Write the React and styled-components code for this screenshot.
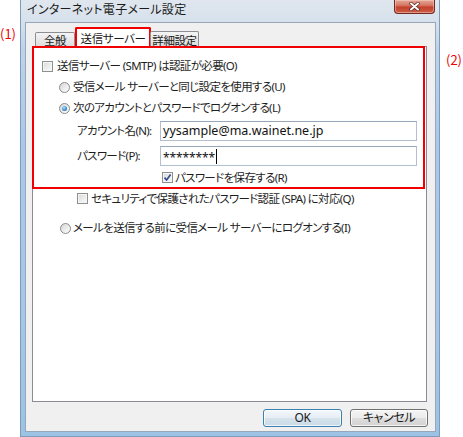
import React from 'react';
import styled, { createGlobalStyle } from 'styled-components';

const font = `"Noto Sans CJK JP", "Noto Sans", sans-serif`;
const mixed = `"Noto Sans", "Noto Sans CJK JP", sans-serif`;

const Global = createGlobalStyle`
  html, body { margin: 0; padding: 0; background: #ffffff; }
  body { width: 463px; height: 437px; overflow: hidden; font-family: ${font}; }
  * { box-sizing: border-box; }
`;

const Page = styled.div`
  display: flex;
  width: 463px;
  height: 437px;
`;

const Gutter = styled.div`
  flex: none;
  width: ${p => p.$w}px;
  padding-top: ${p => p.$top}px;
  padding-left: ${p => p.$left || 0}px;
`;

const Note = styled.span`
  display: block;
  color: #ee0000;
  font: 13px/13px ${font};
  font-feature-settings: "palt";
`;

const Window = styled.div`
  flex: none;
  width: 420px;
  height: 437px;
  display: flex;
  flex-direction: column;
  border: 1px solid #7f9bbb;
  border-top: none;
  background: linear-gradient(180deg, #dfe6ee 0px, #d8e2ec 20px, #bcd3ea 50px, #aac9ea 140px, #a6c7ea 300px, #9cc3e4 100%);
`;

const TitleBar = styled.div`
  height: 22px;
  flex: none;
  display: flex;
  justify-content: space-between;
  align-items: flex-start;
  padding-left: 6px;
  padding-right: 4px;
`;

const Title = styled.span`
  font: 12px/16px ${font};
  font-feature-settings: "palt";
  color: #1c1c1c;
  padding-top: 1px;
  letter-spacing: 0.3px;
`;

const CloseButton = styled.div`
  width: 41px;
  height: 14px;
  border: 1px solid #6e2b23;
  border-top: none;
  border-radius: 0 0 4px 4px;
  background: linear-gradient(180deg, #e4a596 0%, #d77a66 40%, #c3412e 55%, #cf5e45 100%);
  box-shadow: inset 0 0 0 1px rgba(255, 220, 210, 0.45);
  display: flex;
  align-items: center;
  justify-content: center;
`;

const Frame = styled.div`
  flex: 1;
  display: flex;
  padding: 0 3px 4px 4px;
`;

const Client = styled.div`
  flex: 1;
  display: flex;
  flex-direction: column;
  background: #f0f0f0;
  border: 1px solid #97a7b9;
`;

const TabStrip = styled.div`
  height: 23px;
  flex: none;
  display: flex;
  align-items: flex-end;
  margin: 0 8px 0 6px;
  padding-left: 3px;
  position: relative;
  z-index: 1;
`;

const Tab = styled.div`
  height: ${p => (p.$active ? 19 : p.$h)}px;
  width: ${p => p.$w}px;
  margin-left: ${p => p.$ml || 0}px;
  display: flex;
  align-items: center;
  justify-content: center;
  padding-top: ${p => (p.$active ? 0 : 1)}px;
  font: 11.5px/12px ${font};
  font-feature-settings: "palt";
  letter-spacing: -0.4px;
  color: #1a1a1a;
  border: ${p => (p.$active ? '2px solid #f00000' : '1px solid #8c8e94')};
  border-bottom: none;
  border-radius: 2px 2px 0 0;
  background: ${p => (p.$active ? '#ffffff' : 'linear-gradient(180deg, #f4f4f4 0%, #e8e8e8 55%, #dddddd 100%)')};
`;

const Panel = styled.div`
  height: 356px;
  flex: none;
  margin: 0 8px 0 6px;
  border: 1px solid #898c95;
  background: #ffffff;
  display: flex;
  flex-direction: column;
`;

const Highlight = styled.div`
  height: 143px;
  flex: none;
  margin: -1px 1px 0 -1px;
  border: 2px solid #f00000;
  padding-top: 8px;
  display: flex;
  flex-direction: column;
  position: relative;
  z-index: 2;
`;

const textStyle = `
  font: 11.5px/14px ${mixed};
  font-feature-settings: "palt";
  letter-spacing: -0.65px;
  color: #1e1e1e;
  white-space: nowrap;
`;

const Row = styled.div`
  display: flex;
  align-items: center;
  height: ${p => p.$h || 20}px;
  margin-top: ${p => p.$mt || 0}px;
  padding-left: ${p => p.$indent}px;
  gap: ${p => p.$gap || 3}px;
  ${textStyle}
`;

const Box = styled.span`
  flex: none;
  width: 11px;
  height: 11px;
  border: 1px solid #8e8f8f;
  background: linear-gradient(135deg, #d8d8d8 0%, #eeeeee 60%, #fbfbfb 100%);
  box-shadow: inset 0 0 0 1px #f6f6f6;
  display: flex;
  align-items: center;
  justify-content: center;
`;

const Radio = styled.span`
  flex: none;
  width: 11px;
  height: 11px;
  border-radius: 50%;
  border: 1px solid #8a8a8a;
  background: linear-gradient(135deg, #d6d6d6 0%, #efefef 60%, #fdfdfd 100%);
  display: flex;
  align-items: center;
  justify-content: center;
`;

const Dot = styled.span`
  width: 5px;
  height: 5px;
  border-radius: 50%;
  background: radial-gradient(circle at 40% 35%, #b8e3fb 0%, #3a8fd0 55%, #1b4f86 100%);
`;

const FieldGrid = styled.div`
  display: grid;
  grid-template-columns: 83px 257px;
  grid-auto-rows: 20px;
  row-gap: 5px;
  margin-top: 3px;
  padding-left: 43px;
  align-items: center;
  ${textStyle}
`;

const Input = styled.div`
  height: 20px;
  border: 1px solid #b2bfcf;
  border-top-color: #97a6b8;
  background: #ffffff;
  display: flex;
  align-items: center;
  padding-left: 2px;
  font: 12.5px/16px "Noto Sans", sans-serif;
  letter-spacing: 0;
  color: #111;
`;

const Stars = styled.span`
  font: 12px/16px "Noto Sans", sans-serif;
  letter-spacing: -0.1px;
  padding-top: 3px;
`;

const Caret = styled.span`
  width: 1px;
  height: 15px;
  background: #000;
  margin-left: 1px;
`;

const ButtonRow = styled.div`
  display: flex;
  justify-content: flex-end;
  gap: 8px;
  margin-top: 7px;
  padding-right: 7px;
`;

const Button = styled.div`
  width: ${p => p.$w}px;
  height: 18px;
  border: 1px solid ${p => (p.$default ? '#3c7fb1' : '#707070')};
  border-radius: 3px;
  background: ${p =>
    p.$default
      ? 'linear-gradient(180deg, #f3f8fb 0%, #e6eef4 48%, #d6e3ec 52%, #c9dae7 100%)'
      : 'linear-gradient(180deg, #f4f4f4 0%, #ececec 48%, #dedede 52%, #d2d2d2 100%)'};
  box-shadow: inset 0 0 0 1px rgba(255, 255, 255, 0.75);
  display: flex;
  align-items: center;
  justify-content: center;
  font: 12px/14px ${mixed};
  font-feature-settings: "palt";
  letter-spacing: -0.4px;
  color: #1a1a1a;
`;

const CloseIcon = () => (
  <svg width="11" height="9" viewBox="0 0 11 9">
    <path d="M2 1.5 L9 7.5 M9 1.5 L2 7.5" stroke="#5a2a24" strokeWidth="3.4" strokeLinecap="round" />
    <path d="M2 1.5 L9 7.5 M9 1.5 L2 7.5" stroke="#ffffff" strokeWidth="2" strokeLinecap="round" />
  </svg>
);

const Check = () => (
  <svg width="9" height="9" viewBox="0 0 9 9">
    <path d="M1.5 4.6 L3.6 7 L7.6 1.6" fill="none" stroke="#2d4c8a" strokeWidth="1.6" />
  </svg>
);

const Checkbox = ({ checked }) => <Box>{checked && <Check />}</Box>;
const RadioButton = ({ checked }) => <Radio>{checked && <Dot />}</Radio>;

export default function App() {
  return (
    <>
      <Global />
      <Page>
        <Gutter $w={20} $top={27}>
          <Note>(1)</Note>
        </Gutter>
        <Window>
          <TitleBar>
            <Title>インターネット電子メール設定</Title>
            <CloseButton>
              <CloseIcon />
            </CloseButton>
          </TitleBar>
          <Frame>
            <Client>
              <TabStrip>
                <Tab $w={40} $h={14}>全般</Tab>
                <Tab $w={76} $active>送信サーバー</Tab>
                <Tab $w={49} $h={15} $ml={-1}>詳細設定</Tab>
              </TabStrip>
              <Panel>
                <Highlight>
                  <Row $indent={8} $gap={4}>
                    <Checkbox />
                    <span>送信サーバー (SMTP) は認証が必要(O)</span>
                  </Row>
                  <Row $indent={25} $mt={1}>
                    <RadioButton />
                    <span>受信メール サーバーと同じ設定を使用する(U)</span>
                  </Row>
                  <Row $indent={25} $mt={1}>
                    <RadioButton checked />
                    <span>次のアカウントとパスワードでログオンする(L)</span>
                  </Row>
                  <FieldGrid>
                    <span>アカウント名(N):</span>
                    <Input>yysample@ma.wainet.ne.jp</Input>
                    <span>パスワード(P):</span>
                    <Input>
                      <Stars>********</Stars>
                      <Caret />
                    </Input>
                  </FieldGrid>
                  <Row $indent={128} $mt={2} $h={19} $gap={2}>
                    <Checkbox checked />
                    <span>パスワードを保存する(R)</span>
                  </Row>
                </Highlight>
                <Row $indent={44} $h={19}>
                  <Checkbox />
                  <span>セキュリティで保護されたパスワード認証 (SPA) に対応(Q)</span>
                </Row>
                <Row $indent={27} $mt={10} $gap={2}>
                  <RadioButton />
                  <span>メールを送信する前に受信メール サーバーにログオンする(I)</span>
                </Row>
              </Panel>
              <ButtonRow>
                <Button $w={79} $default>OK</Button>
                <Button $w={78}>キャンセル</Button>
              </ButtonRow>
            </Client>
          </Frame>
        </Window>
        <Gutter $w={23} $top={53} $left={6}>
          <Note>(2)</Note>
        </Gutter>
      </Page>
    </>
  );
}
